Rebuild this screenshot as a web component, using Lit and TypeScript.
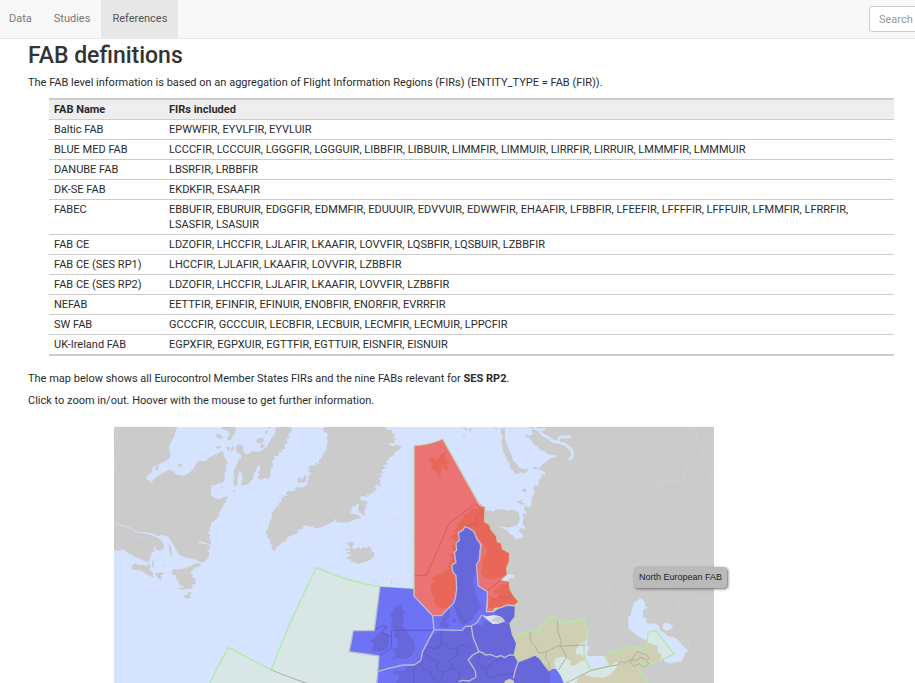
import { LitElement, html, css, svg } from "lit";
import { customElement } from "lit/decorators.js";

const FABS: [string, string][] = [
  ["Baltic FAB", "EPWWFIR, EYVLFIR, EYVLUIR"],
  ["BLUE MED FAB", "LCCCFIR, LCCCUIR, LGGGFIR, LGGGUIR, LIBBFIR, LIBBUIR, LIMMFIR, LIMMUIR, LIRRFIR, LIRRUIR, LMMMFIR, LMMMUIR"],
  ["DANUBE FAB", "LBSRFIR, LRBBFIR"],
  ["DK-SE FAB", "EKDKFIR, ESAAFIR"],
  ["FABEC", "EBBUFIR, EBURUIR, EDGGFIR, EDMMFIR, EDUUUIR, EDVVUIR, EDWWFIR, EHAAFIR, LFBBFIR, LFEEFIR, LFFFFIR, LFFFUIR, LFMMFIR, LFRRFIR, LSASFIR, LSASUIR"],
  ["FAB CE", "LDZOFIR, LHCCFIR, LJLAFIR, LKAAFIR, LOVVFIR, LQSBFIR, LQSBUIR, LZBBFIR"],
  ["FAB CE (SES RP1)", "LHCCFIR, LJLAFIR, LKAAFIR, LOVVFIR, LZBBFIR"],
  ["FAB CE (SES RP2)", "LDZOFIR, LHCCFIR, LJLAFIR, LKAAFIR, LOVVFIR, LZBBFIR"],
  ["NEFAB", "EETTFIR, EFINFIR, EFINUIR, ENOBFIR, ENORFIR, EVRRFIR"],
  ["SW FAB", "GCCCFIR, GCCCUIR, LECBFIR, LECBUIR, LECMFIR, LECMUIR, LPPCFIR"],
  ["UK-Ireland FAB", "EGPXFIR, EGPXUIR, EGTTFIR, EGTTUIR, EISNFIR, EISNUIR"],
];

// Map drawing, three user units to a screen pixel. Each region has its own origin.

const northAmerica = svg`<g transform="translate(-12 -6)">
  <path class="land" d="M12 6H202L196 20 194 34 187 42 183 55 176 66 181 84 180 98 170 106 158 113 150 116 146 120 136 121 128 127 126 140 118 147 108 157 110 166 119 165 118 172 124 173 132 163 144 152 160 144 170 137 181 133 190 140 200 149 214 152 228 150 240 142 250 132 258 116 264 109 280 108 290 107 292 102 300 96 312 90 328 83 334 78 341 82 341 95 345 99 352 112 348 122 350 135 342 147 345 160 340 171 324 176 312 182 303 178 306 190 298 193 305 198 302 211 316 220 330 222 342 216 356 214 348 223 347 231 340 238 342 243 333 251 334 258 326 262 329 270 322 274 324 280 316 282 312 291 304 290 303 304 298 308 302 318 292 322 300 328 297 340 303 346 302 360 290 355 276 350 265 348 266 353 280 356 298 360 300 373 290 374 298 381 297 395 284 410 273 412 256 404 247 401 222 397 206 388 196 370 184 349 174 335 158 330 144 333 130 326 112 322 83 321 60 308 40 302 12 291Z"/>
  <path class="land" d="M12 292L36 304 60 310 80 322 110 326 128 331 145 340 158 350 162 362 160 372 150 377 138 375 136 362 132 370 134 379 124 384 120 400 116 412 100 407 88 400 80 398 66 390 54 385 45 377 34 373 25 378 12 375Z"/>
  <path class="land" d="M66 422L76 415 88 421 104 420 112 425 116 412 121 422 119 433 127 441 132 460 118 452 104 445 96 437 84 435 66 434ZM128 404L133 410 130 420 134 429 126 424ZM134 445L160 442 162 446 148 453 156 455 153 464 142 459ZM176 356L184 367 186 388 188 396 181 390 177 374ZM154 421H164V423H154Z"/>
  <path class="land" d="M184 441L190 433 210 433 230 428 246 420 262 415 275 416 270 422 256 428 245 437 240 445 250 449 244 454 252 460 260 464 255 469 258 478 245 478 250 485 242 490 252 494 232 490 222 494 208 492 202 489 222 487 206 477 206 468 196 458 198 451 188 449ZM218 512L232 510 234 500 245 503 238 512 242 518 230 522Z"/>
  <path class="land" d="M138 122L144 122 145 130 140 139 136 132ZM203 118L210 115 218 119 210 128ZM319 28L328 27 338 34 339 40 328 41 320 36ZM316 66L326 63 333 68 322 71ZM350 67L358 64 359 76 354 78ZM366 64H371V74L362 80ZM332 186L338 183 339 187 334 189ZM369 197L376 195 377 200 369 201Z"/>
  <path class="line" d="M22 6L22 52 28 78 18 96 20 112 12 136M12 290L34 304 42 320 55 335 70 343 86 335 98 336 107 350 101 365 85 378 80 397M109 302L110 325M12 298L38 303 50 303 68 308"/>
</g>
<g transform="translate(228 -6)">
  <path class="land" d="M94 6H138L136 22 128 34 122 46 113 46 112 36 120 28 110 16 98 14ZM80 29L90 26 97 34 92 41 80 36ZM78 66L88 63 94 68 82 72ZM112 70L118 68 118 77 112 76ZM124 70H129V76L123 82ZM198 45L205 40 218 41 222 49 214 55 202 54ZM233 6L242 6 238 12ZM226 18L234 16 232 26 224 26Z"/>
  <path class="land" d="M258 6H306L304 20 295 26 298 40 290 42 293 55 283 60 285 72 275 73 278 82 268 80 266 92 252 94 254 104 246 108 250 122 242 132 242 150 236 162 224 158 216 164 203 162 205 152 210 148 203 142 208 138 211 122 205 120 197 137 190 150 190 162 182 168 176 176 163 181 153 181 158 160 154 142 148 138 143 156 142 180 133 184 129 170 132 158 130 138 138 124 147 102 154 100 152 88 140 82 136 70 142 59 154 58 161 66 159 78 166 88 176 87 184 80 196 79 210 80 220 72 230 66 238 52 245 38 254 30 256 16Z"/>
</g>`;

const atlantic = svg`<g transform="translate(438 -6)">
  <path class="land" d="M195 6L188 12 190 20 204 26 200 36 203 50 198 68 200 76 188 86 186 96 176 108 178 116 164 113 168 122 156 120 143 127 150 133 142 138 154 144 146 154 143 160 148 164 139 168 145 175 136 183 127 188 110 186 104 192 108 197 80 200 78 206 84 212 66 212 76 220 62 220 64 230 55 236 60 244 46 242 52 250 40 252 42 260 34 266 37 276 28 290 26 306 18 320 22 337 32 345 30 355 36 360 34 368 40 377 47 374 50 367 70 350 80 347 82 337 112 324 114 316 130 310 128 302 142 302 150 307 160 303 160 310 180 308 200 300 212 292 221 290 225 280 229 291 246 293 266 292 284 284 304 278 296 271 282 268 268 264 276 261 270 256 279 252 274 244 287 244 290 236 298 238 294 250 298 263 304 265 306 271 316 269 313 257 320 243 313 240 323 234 317 228 302 226 300 215 310 212 320 217 322 207 333 213 329 204 344 205 337 199 347 197 351 190 340 186 350 184 348 176 360 182 367 185 358 174 364 168 356 162 368 152 355 148 372 144 363 136 378 128 368 121 384 117 377 109 390 104 384 98 398 94 408 78 418 75 424 66 410 58 404 62 390 62 388 54 405 55 403 46 412 40 398 38 407 28 394 24 397 15 380 14 377 6Z"/>
  <path class="land" d="M112 160L120 156 126 164 136 148 139 164 132 174 122 170 114 176ZM258 356L270 350 280 350 281 360 274 366 280 371 288 373 294 367 302 372 310 366 318 370 326 364 334 369 334 377 343 383 343 393 334 402 324 408 312 412 295 418 284 412 272 411 274 404 260 402 262 396 272 394 272 388 256 386 268 381 274 377 254 375 260 371 270 372 270 363ZM0 40H12L6 50 0 52ZM0 60L10 56 16 64 4 70ZM400 283L408 279 405 284ZM393 462L398 468 394 479Z"/>
  <path class="zone" d="M170 427C220 452 285 473 360 485L470 492V786H-150L-95 667 34 735Z"/>
  <path class="rim" d="M170 427C220 452 285 473 360 485L465 492M170 427C120 525 74 625 34 735L-95 667Q-126 722 -156 786"/>
  <path class="rule" d="M34 735Q84 756 155 780"/>
</g>`;

const russia = svg`<g transform="translate(1098 -6)">
  <path class="land" d="M142 6L158 10 154 20 162 27 148 31 146 38 153 44 160 56 172 64 182 76 196 80 206 89 224 90 232 95 214 99 200 109 186 119 180 129 160 125 158 131 178 133 196 143 194 150 185 148 186 158 177 161 177 174 170 184 165 178 160 188 163 202 154 222 155 240 148 246 136 244 132 234 122 230 132 224 120 226 110 231 124 238 135 240 132 252 142 268 126 266 130 274 128 296 138 312 120 310 116 318 128 326 130 338 106 342 98 330 90 328 84 318 72 312 52 304 78 306 88 308 110 300 118 290 119 278 117 265 112 258 96 254 82 257 68 252 46 254 40 260 30 256 10 258 -40 300V786H702V6Z"/>
  <path class="land" d="M62 12L74 10 76 20 74 36 80 58 88 78 96 92 98 106 106 112 118 128 130 132 145 132 140 142 126 146 124 140 116 146 104 146 102 140 90 128 89 112 80 104 77 94 70 82 66 58 65 42 68 34 62 24ZM126 194L134 189 140 195 136 202 128 200ZM48 6L52 16 44 14ZM136 30L142 28 146 36 138 38Z"/>
  <path class="river" d="M160 8L176 15 196 12M178 20L190 31 204 37 220 49 236 53M236 53Q234 34 248 35L262 37 272 33M236 53L254 57 262 65 274 74 278 88 275 98 266 104"/>
</g>
<g transform="translate(1308 -6)">
  <path class="water" d="M270 520L280 525 286 535 284 543 294 548 280 555 279 568 278 575 290 580 288 590 300 597 316 595 328 604 330 617 345 624 352 634 372 636 390 650 396 660 414 676 402 690 400 702 390 710 372 712 366 716 345 712 336 690 325 665 305 656 288 646 262 633 250 622 240 615 235 610 234 575 242 572 245 555 252 533 262 528ZM340 595L355 594 370 603 364 611 350 619 338 610Z"/>
  <path class="line" d="M434 6L442 22 440 44 450 62 458 78 455 95 440 108 428 112 412 124 410 140 400 152 400 166H345L320 172 320 200 308 215 285 222 272 224 262 238 262 275 250 310 237 330 256 345 256 368 270 365 284 372 282 390 270 410 250 420 240 438 212 444 194 460 180 482 178 500 184 515 174 530 186 552 215 556 236 566M458 95L480 100 492 125 480 160 492 170M458 78L465 62 480 60 492 48M345 490L330 520 378 578 388 568 382 558 386 530 398 528 406 516 420 520 432 526 450 518 470 524 492 520M492 602L465 604 440 612 420 640 414 670"/>
</g>`;

const east = svg`<g transform="translate(1308 -6)">
  <path class="tan" d="M-108 646L-98 630 -78 622 -60 620 -48 616 -30 618 -25 598 -8 585 2 572 12 574 22 586 40 596 58 588 85 586 100 580 106 588 104 600 116 612 108 638 102 650 102 690 122 737 180 723 164 693 190 680 214 676 240 663 268 670 290 669 294 622 318 617 371 687 328 708 296 720 276 720 264 730 276 745 272 750 290 762 292 786H-200Z"/>
  <path class="zone" d="M-2 786L8 740 20 738 12 712 18 700 40 695 48 698 62 708 60 722 78 720 88 710 108 706 102 698 92 688 76 688 80 670 90 656 104 650 104 700 122 737 180 723 200 710 206 718 196 732 184 747 160 758 130 756 96 748 84 762 76 786ZM294 622L318 617 371 687 328 708 336 690 324 680 322 662 300 656 290 648Z"/>
  <path class="water" d="M118 630L112 644 110 660 118 668 108 690 120 694 164 693 180 723 122 737 104 690 104 654Z"/>
  <path class="rim" d="M-108 646L-98 630 -78 622 -60 620 -48 616 -30 618 -25 598 -8 585 2 572 12 574 22 586 40 596 58 588 85 586 100 580 106 588 104 600 116 612 108 638 102 650 102 690 122 737 180 723 164 693 190 680 214 676 240 663 268 670 290 669 294 622 318 617 371 687 328 708 296 720 276 720 264 730 276 745 272 750 290 762 292 786"/>
  <path class="rule" d="M-60 620L-58 650 -44 664 -34 685 -10 680 20 664 105 660M22 586L24 620 34 650 30 660 50 696 25 735M45 776L122 737 180 723 204 720 212 710 226 714 240 704 260 706 270 696 290 704 296 718 280 726 268 716 254 724 240 714 250 696 262 680 290 690 300 704M-10 680L-14 700 -2 715 -4 740"/>
</g>`;

const europe = svg`<g transform="translate(858 -6)">
  <path class="blue" d="M-60 485L42 492V513L98 572 160 300H222L262 500 258 560 285 559 300 548 320 540 346 545 345 576 330 595 338 630 350 655 343 690 355 710 375 705 388 698 405 690 420 700 432 718 438 728 450 738 456 732 468 732 482 752 496 786H-72L-63 693-152 680-140 617-77 617Z"/>
  <path class="deep" d="M195 305L222 320 238 345 240 370 230 410 236 420 228 450 218 460 224 490 232 520 246 545 232 560 215 585 190 600 178 590 168 570 165 530 172 490 160 430 168 345ZM-8 540L8 540 4 554 16 560 8 574 12 590 4 600 20 615 28 632 44 650 46 672 34 692 20 702-12 700-30 706-12 690-24 674-6 666-8 642-20 636-14 614-28 604-22 584-30 572-18 548ZM-70 632L-54 620-34 630-32 654-40 674-60 680-86 676-76 656-90 648ZM122 590L138 560 148 548 150 575 136 590 150 600 140 612 118 606ZM160 580L168 582 166 594 158 592ZM285 560L305 548 346 545 345 576 330 595 312 588ZM92 640L118 616 160 622 200 608 220 600 244 602 256 586 275 595 330 595 338 630 350 655 343 690 355 710 405 690 432 718 448 738 452 786H-18L0 752-20 744-18 736 12 738 20 722 40 720 56 700 72 680Z"/>
  <path class="patch" d="M245 570L262 574 282 570 300 574 315 588 296 596 278 597Z"/>
  <path class="land" d="M270 587L292 574 306 577 315 588 296 594Z"/>
  <path class="tan" d="M312 786L314 768 328 761 340 766 348 786Z"/>
  <path class="red" d="M42 62Q88 60 128 42L240 241 255 246V262L254 290 270 300 272 312 290 333 292 350 304 354 308 372 329 384 328 410 320 430 322 450 305 465 328 468 330 492 340 510 357 530 345 541 320 540 302 548 285 550 280 560 258 560 262 545V500L235 483 229 420 238 406 243 358 232 345 222 320 208 310 195 305 188 316 175 322 178 345 168 355 170 376 162 382 168 412 155 420 158 440 168 452 170 498 160 525 125 571 98 572 42 513Z"/>
  <path class="ember" d="M255 246V290L270 300 272 312 290 333 292 350 304 354 308 372 329 384 328 410 320 430 322 450 292 460 270 465 252 456 242 440 250 420 246 400 262 380 254 365 243 350 222 320 195 305 175 322 178 345 168 355 168 412 155 420 158 440 168 452 170 498 160 520 158 528 148 545 130 551 112 544 100 530 104 515 94 505 92 480 108 470 92 462 106 452 128 445 148 430 140 426 158 398 148 392 158 380 156 362 164 345 150 335 166 326 158 318 178 304 170 298 192 280 190 270 212 260 210 250 228 252 240 244ZM280 500L300 480 328 470 330 492 340 510 357 530 345 541 320 540 302 548 285 550 262 548 266 528 276 518 294 524 296 510ZM84 104L98 98 110 108 122 88 140 82 132 96 150 112 140 120 148 132 136 136 126 120 122 138 122 160 108 142 92 128 98 116Z"/>
  <path class="dark" d="M42 451H80L108 385 148 295 220 240H244M222 320L200 302 215 296 228 302 230 270 238 262 250 270M262 497L303 465M265 515L285 524 300 515 322 520 340 508"/>
  <path class="seam" d="M160 538L192 585 208 600M0 616H100M-25 616V645L-28 672-63 693M-77 617L-58 603-40 604-55 624-26 636M122 614L125 650 120 666 102 672 86 664 70 680M125 650L150 672 172 672 182 658 210 668M70 680L88 698 116 710 108 730 128 742 122 770M128 742L160 730 148 708 172 690 172 672M160 730L180 746 176 765M240 690L232 712 256 735 280 710 305 698 343 692M256 735L268 760 300 750 343 745M60 718L72 734 92 738 98 760 118 770M42 720V786M-25 616H0"/>
  <path class="pale" d="M98 572L102 614M-68 740L-34 730 10 720 42 720 62 706 68 680 102 614 186 616 196 604 214 603 230 594 245 570M214 603L220 640 228 658 237 680 250 684 256 690 270 688 290 696 302 692 314 698 328 690 343 690M237 680L218 690 205 705 216 722 226 738 228 756 208 768 188 766 176 770M355 710L346 735 340 760M42 513L98 572 125 571 160 535 166 520 170 490 168 452 158 440 155 420 168 412 162 382 170 376 168 355 178 345 175 322 188 316 195 305 208 310 222 320 232 345 243 358 238 406 229 420 235 483 262 500V545L258 560M-60 485L-77 617-140 617-152 680-63 693-70 786"/>
  <path class="shore" d="M42 513V62Q88 60 128 42L240 241 255 246 254 290 270 300 272 312 290 333 292 350 304 354 308 372 329 384 328 410 320 430 322 450 305 465 328 468 330 492 340 510 357 530 345 541 320 540 302 548 285 550 280 560 258 560M346 545L345 576 330 595 338 630 350 655 343 690 355 710 388 698 405 690 420 700 432 718 448 738"/>
  <path class="water" d="M318 452L330 446 344 452 340 460 328 460 322 468 306 464Z"/>
  <path class="line" d="M358 530L372 534 390 528 402 530 410 546 420 552 432 562 428 580"/>
  <path class="dot" d="M186 8H200V18L192 12ZM204 14L214 10 212 22ZM188 34L196 32 192 40Z"/>
</g>`;

@customElement("app-root")
export class AppRoot extends LitElement {
  static styles = css`
    :host { display: block; height: 100vh; overflow: hidden; background: #fff; color: #2b2b2b;
      font: 11px/15px Roboto, "Liberation Sans", Arial, sans-serif; }
    nav { display: flex; align-items: center; height: 38px; background: #f8f8f8; border-bottom: 1px solid #e7e7e7; overflow: hidden; }
    .link { padding: 11px; line-height: 16px; color: #777; text-decoration: none; }
    .first { padding-left: 9px; }
    .active { color: #555; background: #e7e7e7; }
    .search { margin-left: auto; flex: 0 0 46px; min-width: 0; }
    input { box-sizing: border-box; width: 160px; height: 26px; padding: 0 9px; border: 1px solid #ccc; border-radius: 3px; background: #fff; font: inherit; }
    input::placeholder { color: #999; }
    main { padding: 4px 21px 0 28px; }
    h1 { margin: 0 0 6px; font-size: 23px; line-height: 26px; font-weight: 500; color: #333; }
    p { margin: 0 0 7px; }
    table { width: calc(100% - 21px); margin: 8px 0 15px 21px; border-collapse: separate; border-spacing: 0; border-top: 2px solid #ccc; border-bottom: 1px solid #ccc; }
    th, td { padding: 2px 5px; text-align: left; vertical-align: top; border-bottom: 1px solid #ccc; }
    th { background: #eee; }
    .name { width: 105px; }
    .map { position: relative; max-width: 600px; margin: 19px 0 0 86px; }
    svg { display: block; width: 100%; }
    .tip { position: absolute; left: 520px; top: 140px; padding: 3px 5px; border-radius: 4px; background: #bababa; color: #222; font-family: "Liberation Sans", Arial, sans-serif; font-size: 9px; white-space: nowrap; box-shadow: 1px 1px 3px #666; }
    .water { fill: #d5e3ff; }
    .land, .dot { fill: #cbcbcb; }
    .zone { fill: #d8e6e5; }
    .patch { fill: #dbe7f8; }
    .tan { fill: #d0cfb4; }
    .blue { fill: #6e72f5; }
    .deep { fill: #6767da; }
    .red { fill: #ec7373; }
    .ember { fill: #e96759; }
    .line, .rim, .rule, .dark, .seam, .pale, .shore, .river { fill: none; stroke-width: 3; stroke-linejoin: round; }
    .line { stroke: #d0d3da; stroke-width: 2; }
    .rim { stroke: #b2eaa0; stroke-width: 4; }
    .rule { stroke: #aeb0a4; }
    .dark { stroke: #d45e5c; }
    .seam { stroke: #5a5aca; }
    .pale { stroke: #bcbcd2; stroke-width: 4; }
    .shore { stroke: #c9cfae; stroke-width: 4; }
    .river { stroke: #d5e3ff; stroke-width: 8; }
  `;

  render() {
    return html`
      <nav>
        <a class="link first" href="#data">Data</a>
        <a class="link" href="#studies">Studies</a>
        <a class="link active" href="#references">References</a>
        <div class="search"><input type="search" aria-label="Search text" placeholder="Search text"></div>
      </nav>
      <main>
        <h1>FAB definitions</h1>
        <p>The FAB level information is based on an aggregation of Flight Information Regions (FIRs) (ENTITY_TYPE = FAB (FIR)).</p>
        <table>
          <thead><tr><th class="name">FAB Name</th><th>FIRs included</th></tr></thead>
          <tbody>${FABS.map(([name, firs]) => html`<tr><td>${name}</td><td>${firs}</td></tr>`)}</tbody>
        </table>
        <p>The map below shows all Eurocontrol Member States FIRs and the nine FABs relevant for <b>SES RP2</b>.</p>
        <p>Click to zoom in/out. Hoover with the mouse to get further information.</p>
        <div class="map">
          <svg viewBox="0 0 1800 780" role="img" aria-label="Map of functional airspace blocks">
            <rect class="water" width="1800" height="780"/>
            ${northAmerica}${atlantic}${russia}${east}${europe}
          </svg>
          <div class="tip" role="tooltip">North European FAB</div>
        </div>
      </main>`;
  }
}
